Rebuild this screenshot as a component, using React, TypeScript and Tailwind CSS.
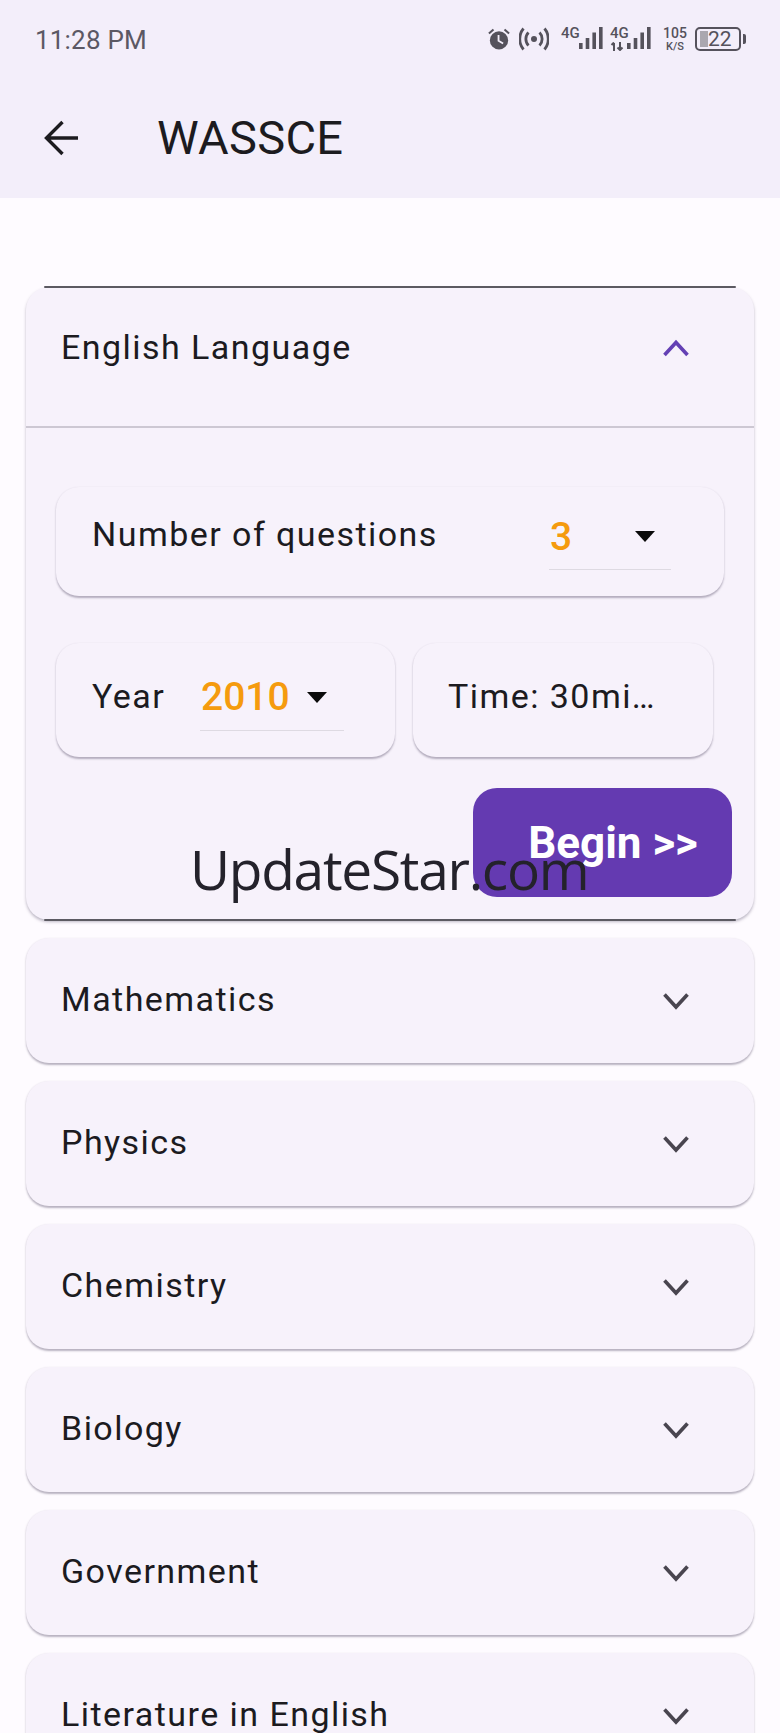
const FONT = "font-['Roboto',sans-serif]";

function Chevron({ up = false }: { up?: boolean }) {
  return (
    <svg width="28" height="18" viewBox="0 0 28 18" className="shrink-0">
      <path
        d={up ? "M2.5 16 L14 3.5 L25.5 16" : "M2.5 2.5 L14 15 L25.5 2.5"}
        fill="none"
        stroke={up ? "#6440b4" : "#49454f"}
        strokeWidth="3.6"
      />
    </svg>
  );
}

function Caret() {
  return (
    <svg width="20" height="11" viewBox="0 0 20 11" className="shrink-0">
      <path d="M0 0 H20 L10 11 Z" fill="#0b0b0b" />
    </svg>
  );
}

function Bars() {
  return (
    <svg width="24" height="24" viewBox="0 0 24 24" className="shrink-0">
      <rect x="0" y="16" width="3.6" height="6" fill="#55525c" />
      <rect x="6.7" y="11" width="3.6" height="11" fill="#55525c" />
      <rect x="13.4" y="5.5" width="3.6" height="16.5" fill="#55525c" />
      <rect x="20" y="0" width="3.6" height="22" fill="#55525c" />
    </svg>
  );
}

function Alarm() {
  return (
    <svg width="22" height="22" viewBox="0 0 24 24" className="shrink-0 mt-[1px]">
      <circle cx="12" cy="13.5" r="10" fill="#55525c" />
      <path d="M1 6 L6 1.6 M23 6 L18 1.6" stroke="#55525c" strokeWidth="2.2" fill="none" />
      <path d="M11.5 7.5 V14 L16.5 17" stroke="#f3eefa" strokeWidth="2" fill="none" />
    </svg>
  );
}

function Hotspot() {
  return (
    <svg width="30" height="24" viewBox="0 0 30 24" className="shrink-0">
      <circle cx="15" cy="12" r="3" fill="#55525c" />
      <path d="M9.5 5.5 C6 9 6 15 9.5 18.5 M20.5 5.5 C24 9 24 15 20.5 18.5" stroke="#55525c" strokeWidth="2.8" fill="none" />
      <path d="M4.5 1.5 C-0.5 7.5 -0.5 16.5 4.5 22.5 M25.5 1.5 C30.5 7.5 30.5 16.5 25.5 22.5" stroke="#55525c" strokeWidth="2.8" fill="none" />
    </svg>
  );
}

function Arrows() {
  return (
    <svg width="16" height="9" viewBox="0 0 16 9" className="block">
      <path d="M4 9 V1 M1.5 3 L4 0.5 M10 0 V8 M7.5 5.5 L10 8 L12.5 5.5" stroke="#55525c" strokeWidth="2" fill="none" />
    </svg>
  );
}

function StatusBar() {
  return (
    <div className="h-[64px] pl-[35px] pr-[34px] flex items-center justify-between">
      <span className="text-[26px] leading-none text-[#5b5864] tracking-[0.2px] mt-[15px]">11:28 PM</span>
      <div className="flex items-start mt-[15px] text-[#55525c]">
        <Alarm />
        <div className="ml-[9px]"><Hotspot /></div>
        <div className="ml-[12px] w-[18px] text-[15px] leading-[13px] font-medium">4G</div>
        <div className="w-[24px]"><Bars /></div>
        <div className="ml-[7px] w-[17px] flex flex-col">
          <span className="text-[15px] leading-[13px] font-medium">4G</span>
          <span className="mt-[2px]"><Arrows /></span>
        </div>
        <div className="w-[24px]"><Bars /></div>
        <div className="ml-[12px] w-[24px] flex flex-col items-center font-medium">
          <span className="text-[14px] leading-[12px]">105</span>
          <span className="text-[11px] leading-[11px] mt-[2px]">K/S</span>
        </div>
        <div className="ml-[8px] w-[46px] h-[24px] border-2 border-[#55525c] rounded-[5px] flex items-center pl-[3px]">
          <div className="w-[8px] h-[16px] bg-[#aaa7af]" />
          <span className="text-[21px] leading-none text-[#55525c]">22</span>
        </div>
        <div className="ml-[2px] mt-[7px] w-[3px] h-[10px] bg-[#55525c] rounded-r-[2px]" />
      </div>
    </div>
  );
}

function AppBar() {
  return (
    <div className="h-[134px] pl-[43px] pt-[13px] flex items-center">
      <svg width="36" height="36" viewBox="0 0 36 36" className="shrink-0">
        <path d="M35 18 H4 M19.5 2 L3.5 18 L19.5 34" fill="none" stroke="#1c1b1f" strokeWidth="3.4" />
      </svg>
      <span className="ml-[78px] text-[47px] leading-none text-[#1c1b1f] tracking-[0.3px]">WASSCE</span>
    </div>
  );
}

const cardShadow = "shadow-[0_1.5px_2px_rgba(70,60,90,0.38)]";
const labelClass = "text-[34px] leading-none text-[#1c1b1f] tracking-[1.45px]";

function SubjectRow({ name }: { name: string }) {
  return (
    <div className={`mx-[26px] h-[125px] mt-[18px] rounded-[23px] bg-[#f7f2fb] pl-[35px] pr-[64px] flex items-center justify-between shrink-0 ${cardShadow}`}>
      <span className={`${labelClass} -mt-[3px]`}>{name}</span>
      <Chevron />
    </div>
  );
}

function InnerCard({ className, children }: { className: string; children: React.ReactNode }) {
  return (
    <div className={`rounded-[23px] bg-[#f7f2fb] flex items-center ${cardShadow} ${className}`}>
      {children}
    </div>
  );
}

export default function App() {
  return (
    <div className={`relative w-[780px] h-[1733px] overflow-hidden bg-[#fefbff] ${FONT}`}>
      <div className="bg-[#f3eefa] h-[198px]">
        <StatusBar />
        <AppBar />
      </div>

      <div className="relative mx-[26px] mt-[89px] h-[633px] rounded-[23px] bg-[#f7f2fb] shadow-[0_2px_3px_rgba(70,60,90,0.35)]">
        <div className="absolute left-[18px] right-[18px] -top-[1px] h-[2px] rounded-full bg-[#5c5a62]" />
        <div className="absolute left-[18px] right-[18px] -bottom-[1px] h-[2px] rounded-full bg-[#5c5a62]" />
        <div className="h-[141px] border-b-2 border-[#cdc8d3] pl-[35px] pr-[64px] pb-[18px] flex items-center justify-between">
          <span className={`${labelClass} -mt-[2px]`}>English Language</span>
          <Chevron up />
        </div>

        <div className="pl-[30px]">
          <InnerCard className="mt-[59px] h-[109px] w-[668px] pl-[36px] pb-[7px]">
            <span className={`${labelClass} w-[457px] -mt-[8px]`}>Number of questions</span>
            <div className="relative w-[122px] self-stretch flex items-center">
              <span className="text-[39px] leading-none font-medium text-[#f59b0e] ml-[1px] -mt-[1px]">3</span>
              <div className="absolute left-[86px] top-[44px]"><Caret /></div>
              <div className="absolute left-0 right-0 top-[82px] h-px bg-[#dedae2]" />
            </div>
          </InnerCard>

          <div className="mt-[47px] flex gap-[18px]">
            <InnerCard className="h-[114px] w-[339px] pl-[36px] pb-[3px]">
              <span className={`${labelClass} w-[108px] -mt-[6px]`}>Year</span>
              <div className="relative w-[144px] self-stretch flex items-center">
                <span className="text-[39px] leading-none font-medium text-[#f59b0e] ml-[1px] -mt-[2px]">2010</span>
                <div className="absolute left-[107px] top-[49px]"><Caret /></div>
                <div className="absolute left-0 right-0 top-[87px] h-px bg-[#dedae2]" />
              </div>
            </InnerCard>
            <InnerCard className="h-[114px] w-[300px] pl-[35px] pb-[3px]">
              <span className={`${labelClass} -mt-[6px]`}>Time: 30mi…</span>
            </InnerCard>
          </div>

          <div className="mt-[31px] flex justify-end mr-[22px]">
            <div className="w-[259px] h-[109px] rounded-[24px] bg-[#643ab1] flex items-center justify-center pl-[21px]">
              <span className="text-[44px] leading-none font-bold text-white">Begin &gt;&gt;</span>
            </div>
          </div>
        </div>
      </div>

      <SubjectRow name="Mathematics" />
      <SubjectRow name="Physics" />
      <SubjectRow name="Chemistry" />
      <SubjectRow name="Biology" />
      <SubjectRow name="Government" />
      <SubjectRow name="Literature in English" />

      <div className="absolute left-[190px] top-[834px] text-[55px] leading-[70px] tracking-[-1.26px] text-[#24222b] font-['Open_Sans',sans-serif] whitespace-nowrap">
        UpdateStar.com
      </div>
    </div>
  );
}
